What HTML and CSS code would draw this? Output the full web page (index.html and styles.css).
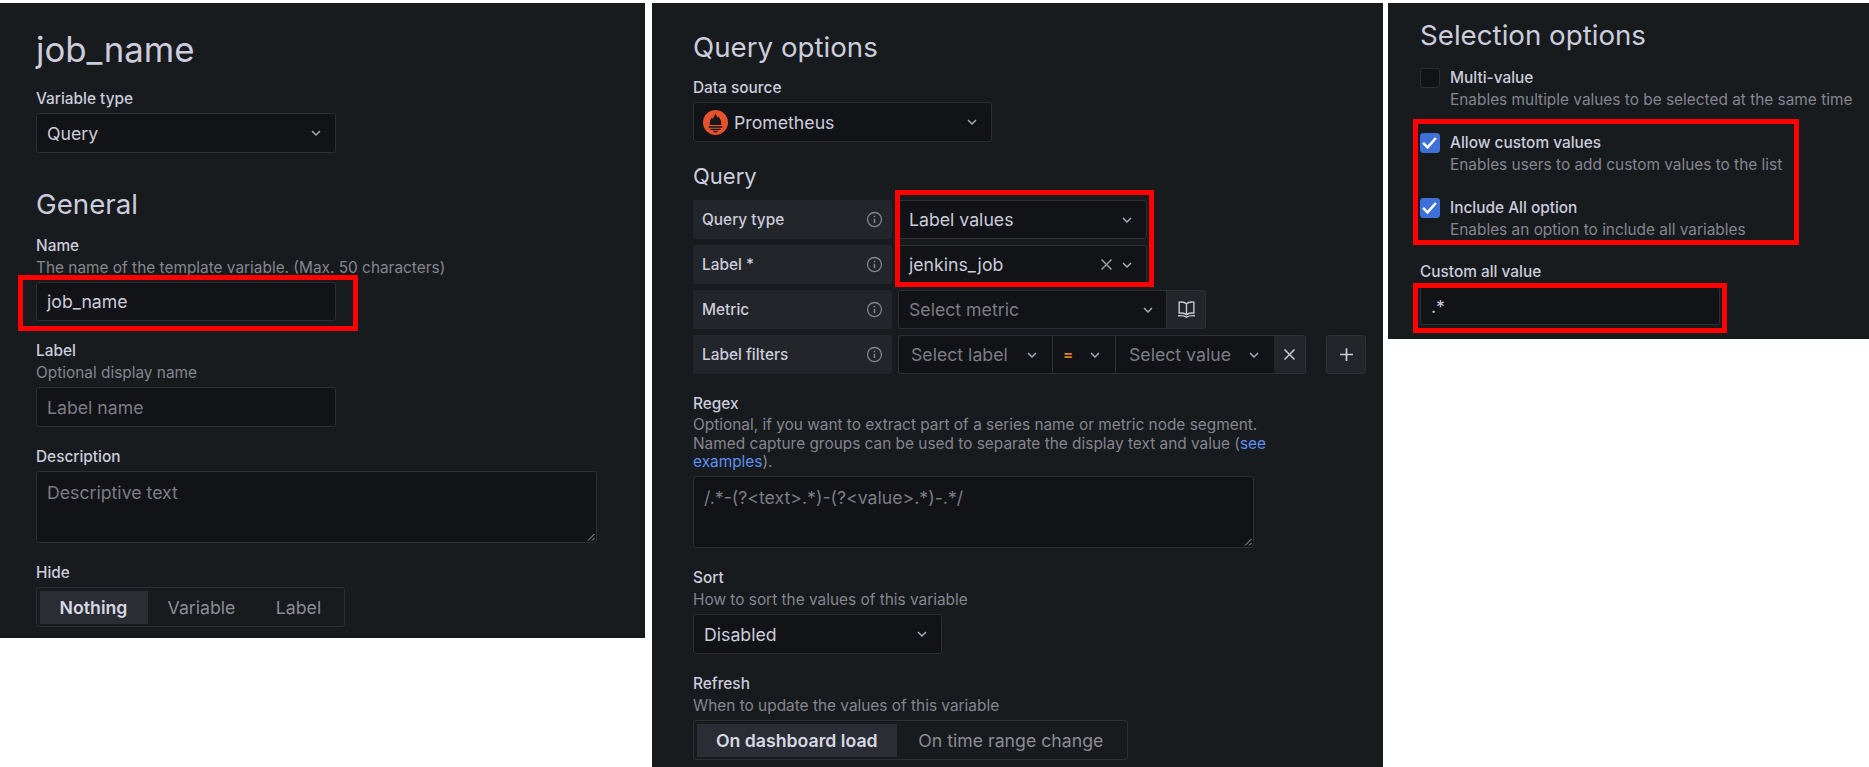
FILE: index.html
```html
<!DOCTYPE html>
<html lang="en">
<head>
<meta charset="utf-8">
<title>Grafana variable settings</title>
<link rel="stylesheet" href="styles.css">
</head>
<body>
<svg class="sprite" aria-hidden="true">
  <symbol id="chev" viewBox="0 0 12 12"><path d="M2 4l4 4 4-4" fill="none" stroke="currentColor" stroke-width="1.5"/></symbol>
  <symbol id="cross" viewBox="0 0 12 12"><path d="M2 2l8 8M10 2l-8 8" fill="none" stroke="currentColor" stroke-width="1.2"/></symbol>
  <symbol id="plus" viewBox="0 0 16 16"><path d="M8 2v12M2 8h12" fill="none" stroke="currentColor" stroke-width="1.6"/></symbol>
  <symbol id="info" viewBox="0 0 16 16"><circle cx="8" cy="8" r="6.6" fill="none" stroke="currentColor" stroke-width="1.2"/><path d="M8 7.4v4M8 4.4v1.4" fill="none" stroke="currentColor" stroke-width="1.4"/></symbol>
  <symbol id="book" viewBox="0 0 20 20"><path d="M10 4.5C8.5 3 5.5 2.6 3 3v10.5c2.5-.4 5.500 0 7 1.500 1.500-1.500 4.500-1.900 7-1.500V3c-2.500-.4-5.500 0-7 1.500zM10 4.500V15M2 16c2.800-.3 6 0 8 1.300 2-1.300 5.200-1.600 8-1.300" fill="none" stroke="currentColor" stroke-width="1.3"/></symbol>
  <symbol id="grip" viewBox="0 0 8 8"><path d="M7.500 1L1 7.500M7.500 5L5 7.500" fill="none" stroke="#a8a8b0" stroke-width="1"/></symbol>
  <symbol id="tick" viewBox="0 0 20 20"><path d="M2.500 10.500l5.200 5.200 9.800-11" fill="none" stroke="#fff" stroke-width="3"/></symbol>
</svg>

<main class="sheet">
  <section class="panel panel-general">
    <h1 class="title">job_name</h1>
    <div class="field field-tight">
      <div class="label">Variable type</div>
      <div class="control w300"><span class="value">Query</span><svg class="chev"><use href="#chev"/></svg></div>
    </div>
    <h2 class="heading heading-general">General</h2>
    <div class="field">
      <div class="label label-help">Name</div>
      <div class="help">The name of the template variable. (Max. 50 characters)</div>
      <div class="marked">
        <div class="control w300 control-name"><span class="value">job_name</span></div>
        <div class="mark mark-name"></div>
      </div>
    </div>
    <div class="field">
      <div class="label label-help">Label</div>
      <div class="help">Optional display name</div>
      <div class="control w300"><span class="placeholder">Label name</span></div>
    </div>
    <div class="field">
      <div class="label">Description</div>
      <div class="area w561"><span class="placeholder">Descriptive text</span><svg class="grip"><use href="#grip"/></svg></div>
    </div>
    <div class="field field-tight">
      <div class="label">Hide</div>
      <div class="radio w309">
        <span class="radio-item active radio-nothing">Nothing</span>
        <span class="radio-item radio-variable">Variable</span>
        <span class="radio-item radio-label">Label</span>
      </div>
    </div>
  </section>

  <section class="panel panel-query">
    <h2 class="heading">Query options</h2>
    <div class="field field-tight source-field">
      <div class="label">Data source</div>
      <div class="control w299 control-source">
        <svg class="logo" viewBox="0 0 24 24" aria-hidden="true">
          <circle cx="12" cy="12" r="12" fill="#e6522c"/>
          <path d="M12 3c.5 2.500 1.700 3 2 4.500.5-.4.700-1 .7-1.500 1.400 2 2.800 4 2.800 6.500v2h-11v-2c0-2.500 1.200-3.800 2.200-5.500.1.800.4 1.300.9 1.700C10 6.500 11.300 5 12 3z" fill="#17191d"/>
          <path d="M5.500 15.500h13v1.500h-13zM7 18h10v1.200H7zM9.500 20h5c-.5 1-1.400 1.500-2.500 1.500S10 21 9.500 20z" fill="#17191d"/>
        </svg>
        <span class="value">Prometheus</span><svg class="chev"><use href="#chev"/></svg>
      </div>
    </div>
    <h3 class="heading heading-query">Query</h3>
    <div class="query-grid">
      <div class="cell-label"><span>Query type</span><svg class="info"><use href="#info"/></svg></div>
      <div class="control w249 control-inline"><span class="value">Label values</span><svg class="chev"><use href="#chev"/></svg></div>
      <div class="cell-label"><span>Label *</span><svg class="info"><use href="#info"/></svg></div>
      <div class="control w249 control-inline"><span class="value">jenkins_job</span><svg class="clear"><use href="#cross"/></svg><svg class="chev chev-after"><use href="#chev"/></svg></div>
      <div class="cell-label"><span>Metric</span><svg class="info"><use href="#info"/></svg></div>
      <div class="joined">
        <div class="control w269 control-inline"><span class="placeholder">Select metric</span><svg class="chev"><use href="#chev"/></svg></div>
        <div class="icon-btn w39"><svg class="book"><use href="#book"/></svg></div>
      </div>
      <div class="cell-label"><span>Label filters</span><svg class="info"><use href="#info"/></svg></div>
      <div class="filters">
        <div class="segment seg-label"><span class="placeholder">Select label</span><svg class="chev"><use href="#chev"/></svg></div>
        <div class="segment seg-op"><span class="op">=</span><svg class="chev"><use href="#chev"/></svg></div>
        <div class="segment seg-value"><span class="placeholder">Select value</span><svg class="chev"><use href="#chev"/></svg></div>
        <div class="icon-btn w32"><svg class="cross"><use href="#cross"/></svg></div>
        <div class="icon-btn w40 add"><svg class="plus"><use href="#plus"/></svg></div>
      </div>
      <div class="mark mark-query"></div>
    </div>
    <div class="field regex-field">
      <div class="label label-help">Regex</div>
      <div class="help help-long">Optional, if you want to extract part of a series name or metric node segment. Named capture groups can be used to separate the display text and value (<a class="link" href="#">see examples</a>).</div>
      <div class="area w561"><span class="placeholder">/.*-(?&lt;text&gt;.*)-(?&lt;value&gt;.*)-.*/</span><svg class="grip"><use href="#grip"/></svg></div>
    </div>
    <div class="field">
      <div class="label label-help">Sort</div>
      <div class="help">How to sort the values of this variable</div>
      <div class="control w249"><span class="value">Disabled</span><svg class="chev"><use href="#chev"/></svg></div>
    </div>
    <div class="field field-tight">
      <div class="label label-help">Refresh</div>
      <div class="help">When to update the values of this variable</div>
      <div class="radio w435">
        <span class="radio-item active radio-load">On dashboard load</span>
        <span class="radio-item radio-range">On time range change</span>
      </div>
    </div>
  </section>

  <section class="panel panel-select">
    <h2 class="heading">Selection options</h2>
    <div class="option">
      <span class="check"></span>
      <div><div class="option-title">Multi-value</div><div class="option-help">Enables multiple values to be selected at the same time</div></div>
    </div>
    <div class="marked options-marked">
      <div class="option">
        <span class="check checked"><svg class="tick"><use href="#tick"/></svg></span>
        <div><div class="option-title">Allow custom values</div><div class="option-help">Enables users to add custom values to the list</div></div>
      </div>
      <div class="option option-last">
        <span class="check checked"><svg class="tick"><use href="#tick"/></svg></span>
        <div><div class="option-title">Include All option</div><div class="option-help">Enables an option to include all variables</div></div>
      </div>
      <div class="mark mark-options"></div>
    </div>
    <div class="custom-field">
      <div class="option-title custom-label">Custom all value</div>
      <div class="marked">
        <div class="control w300 control-custom"><span class="value">.*</span></div>
        <div class="mark mark-custom"></div>
      </div>
    </div>
  </section>
</main>
</body>
</html>
```
FILE: styles.css
```css
* { box-sizing: border-box; }
html, body { margin: 0; height: 767px; overflow: hidden; background: #fff; }
body { font-family: Inter, "Liberation Sans", sans-serif; color: #ccccdc; font-size: 17.7px; }
.sprite { display: none; }

.sheet { display: flex; align-items: flex-start; padding-top: 3px; height: 767px; }
.panel { background: #171b1e; flex: none; }
.panel-general { width: 645px; height: 635px; padding: 26px 0 0 36px; margin-right: 7px; }
.panel-query { width: 731px; height: 764px; padding: 27px 0 0 41px; margin-right: 5px; }
.panel-select { width: 481px; height: 336px; padding: 15px 0 0 32px; }

.title { margin: 0 0 20px; font-size: 34.800px; line-height: 40px; font-weight: 400; }
.heading { margin: 0 0 14px; font-size: 27.700px; line-height: 34px; font-weight: 400; }
.heading-general { margin: 34px 0 15px; }
.heading-query { margin: 17px 0 7px; font-size: 22px; }
.panel-select .heading { margin-bottom: 16px; }

.field { margin-bottom: 20px; }
.field-tight { margin-bottom: 0; }
.regex-field { margin-top: 20px; }

.label { font-size: 15.400px; font-weight: 500; line-height: 20px; margin-bottom: 4px; color: #ccccdc; }
.label-help { margin-bottom: 2px; }
.help { font-size: 15.400px; line-height: 20px; margin-bottom: 4px; color: #85858f; }
.help-long { width: 578px; line-height: 18.700px; margin-bottom: 3.900px; }
.link { color: #5f8ef0; text-decoration: none; }

.control { height: 40px; display: flex; align-items: center; background: #111316; border: 1.5px solid #2d2f35; border-radius: 3px; padding: 0 10px; position: relative; }
.control-name { height: 39px; }
.value { color: #ccccdc; }
.placeholder { color: #7c7c86; }
.w299 { width: 299px; }
.w300 { width: 300px; }
.w249 { width: 249px; }
.w269 { width: 269px; }
.w561 { width: 561px; }
.w309 { width: 309px; }
.w435 { width: 435px; }
.w39 { width: 39px; }
.w32 { width: 32px; }
.w40 { width: 40px; }

.chev { width: 12px; height: 12px; margin-left: auto; margin-right: 3.500px; color: #aaaab4; flex: none; }
.chev-after { margin-left: 6.500px; }
.clear { width: 15px; height: 15px; margin-left: auto; color: #9a9aa4; flex: none; }
.control-source { padding-left: 9px; }
.logo { width: 25px; height: 25px; margin-right: 6px; flex: none; }
.control-inline { padding-left: 10px; }

.area { height: 72px; background: #111316; border: 1.5px solid #2d2f35; border-radius: 3px; padding: 9px 10px; position: relative; line-height: 24px; }
.grip { position: absolute; right: 1px; bottom: 1px; width: 8px; height: 8px; }

.radio { height: 40px; display: flex; align-items: center; border: 1.5px solid #2d2f35; border-radius: 3px; padding: 0 2.500px; }
.radio-item { height: 33px; display: flex; align-items: center; justify-content: center; color: #8c8c96; }
.radio-item.active { background: #2a2d33; color: #d8d8e4; font-weight: 600; }
.radio-nothing { width: 108px; }
.radio-variable { width: 108px; }
.radio-label { width: 86px; }
.radio-load { width: 201px; }
.radio-range { width: 228px; }

.query-grid { display: grid; grid-template-columns: 199px 468px; column-gap: 6px; grid-auto-rows: 39px; row-gap: 6px; position: relative; }
.cell-label { display: flex; align-items: center; justify-content: space-between; background: #22252a; border-radius: 2px; padding: 0 9px 0 9px; font-size: 15.400px; font-weight: 500; }
.info { width: 17px; height: 17px; color: #85858f; }
.query-grid .control { height: 39px; }
.joined { display: flex; }
.joined .control { border-radius: 3px 0 0 3px; }
.joined .chev { margin-right: 2px; }
.icon-btn { display: flex; align-items: center; justify-content: center; background: #22252a; border: 1.5px solid #2d2f35; border-left: none; border-radius: 0 3px 3px 0; color: #ccccdc; height: 39px; }
.book { width: 21px; height: 21px; }
.cross { width: 15px; height: 15px; }
.plus { width: 17px; height: 17px; }
.filters { display: flex; }
.segment { height: 39px; display: flex; align-items: center; background: #111316; border: 1.5px solid #2d2f35; border-right: none; }
.seg-label { width: 154px; padding-left: 12px; border-radius: 3px 0 0 3px; }
.seg-op { width: 63px; padding-left: 10px; }
.seg-value { width: 159px; padding-left: 13px; }
.segment .chev { margin-right: 14px; }
.seg-op .chev { margin-right: 14px; }
.op { color: #e0801e; font-weight: 700; font-size: 15px; }
.add { margin-left: 20px; border-left: 1.5px solid #2d2f35; border-radius: 3px; }

.marked { position: relative; }
.mark { position: absolute; border: 5px solid #fe0000; pointer-events: none; }
.mark-name { left: -18px; top: -7px; width: 340px; height: 56px; }
.mark-query { grid-area: 1 / 2 / 3 / 3; left: -3px; top: -10px; width: 259px; height: 97px; }
.mark-options { left: -7px; top: -14px; width: 386px; height: 126px; }
.mark-custom { left: -7px; top: -4px; width: 314px; height: 50px; }

.option { display: flex; gap: 10px; height: 42px; margin-bottom: 23px; }
.option-last { margin-bottom: 0; }
.check { width: 20px; height: 20px; flex: none; background: #111316; border: 1.5px solid #2d2f35; border-radius: 3px; display: block; }
.check.checked { background: #3d71d9; border-color: #3d71d9; }
.tick { width: 17px; height: 17px; display: block; }
.option-title { font-size: 15.400px; font-weight: 500; line-height: 20px; }
.option-help { font-size: 15.400px; line-height: 20px; margin-top: 2px; color: #85858f; white-space: nowrap; }
.options-marked { margin-bottom: 22px; }
.custom-label { margin-bottom: 5px; }
.control-custom { height: 38px; }
```
